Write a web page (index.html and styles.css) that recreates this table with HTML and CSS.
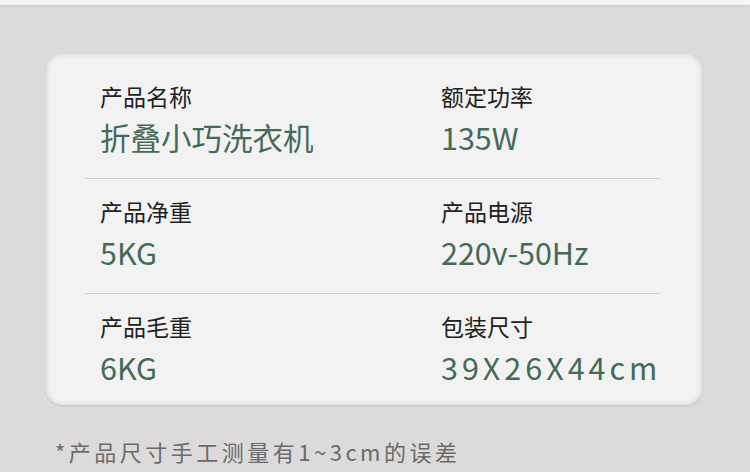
FILE: index.html
```html
<!DOCTYPE html>
<html lang="zh-CN">
<head>
    <meta charset="UTF-8">
    <meta name="viewport" content="width=device-width, initial-scale=1.0">
    <title>产品参数</title>
    <link rel="stylesheet" href="styles.css">
</head>
<body>
    <div class="top-strip"></div>
    <div class="spec-card">
        <div class="spec-row">
            <div class="spec-item">
                <div class="spec-label">产品名称</div>
                <div class="spec-value">折叠小巧洗衣机</div>
            </div>
            <div class="spec-item">
                <div class="spec-label">额定功率</div>
                <div class="spec-value">135W</div>
            </div>
        </div>
        <div class="spec-row">
            <div class="spec-item">
                <div class="spec-label">产品净重</div>
                <div class="spec-value">5KG</div>
            </div>
            <div class="spec-item">
                <div class="spec-label">产品电源</div>
                <div class="spec-value">220v-50Hz</div>
            </div>
        </div>
        <div class="spec-row">
            <div class="spec-item">
                <div class="spec-label">产品毛重</div>
                <div class="spec-value">6KG</div>
            </div>
            <div class="spec-item">
                <div class="spec-label">包装尺寸</div>
                <div class="spec-value wide">39X26X44cm</div>
            </div>
        </div>
    </div>
    <p class="note">*产品尺寸手工测量有1~3cm的误差</p>
</body>
</html>
```

FILE: styles.css
```css
body {
    margin: 0;
    height: 472px;
    overflow: hidden;
    background-color: #dcdada;
    font-family: "Noto Sans CJK SC", "Noto Sans", sans-serif;
}
.top-strip {
    height: 5px;
    background-color: #f5f5f5;
    box-shadow: 0 1px 2px rgba(0, 0, 0, 0.08);
}
.spec-card {
    margin: 49px 0 0 46px;
    width: 656px;
    height: 351px;
    box-sizing: border-box;
    padding: 10px 42px 0 39px;
    background-color: #f2f2f2;
    border-radius: 16px;
    box-shadow: inset 0 0 6px rgba(0, 0, 0, 0.12), 0 1px 2px rgba(0, 0, 0, 0.1);
}
.spec-row {
    display: grid;
    grid-template-columns: 341px 1fr;
    padding: 17px 0 21px 15px;
    border-bottom: 1px solid #cfcfcf;
}
.spec-row:last-child {
    border-bottom: none;
}
.spec-label {
    font-size: 23px;
    line-height: 30px;
    color: #222;
}
.spec-value {
    margin-top: 6px;
    font-size: 30.5px;
    line-height: 40px;
    color: #466a58;
}
.spec-value.wide {
    letter-spacing: 4px;
}
.note {
    margin: 31px 0 0 55px;
    font-size: 22px;
    line-height: 30px;
    color: #6b6b6b;
    letter-spacing: 3.5px;
}
```
